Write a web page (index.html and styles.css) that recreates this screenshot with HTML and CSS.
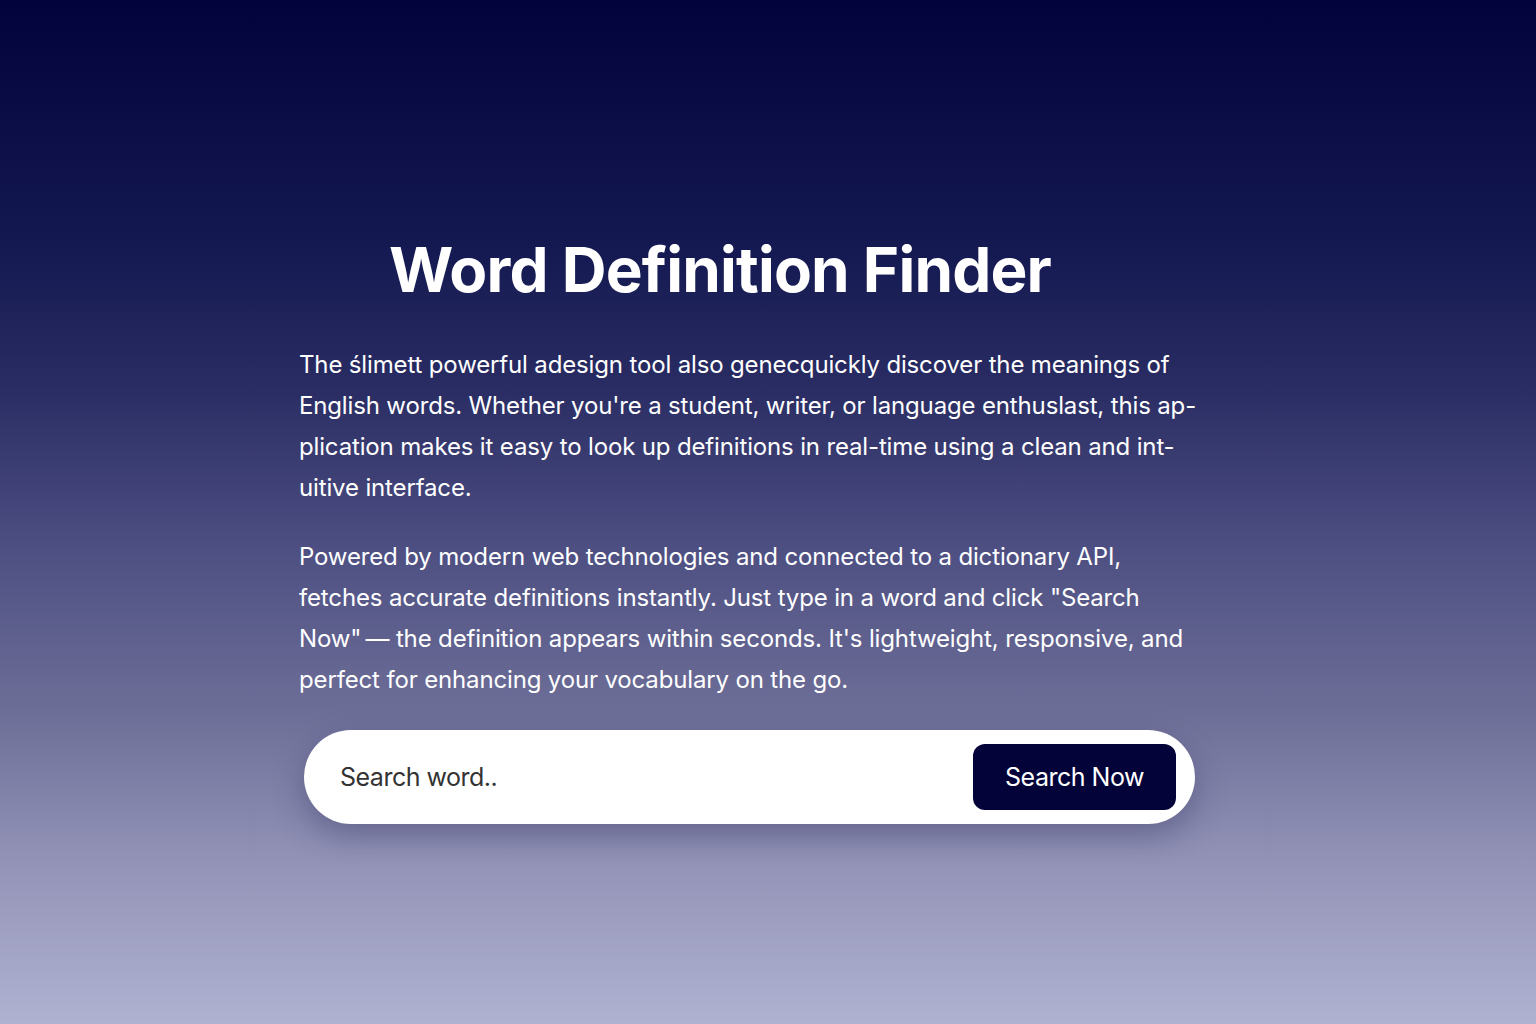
FILE: index.html
```html
<!DOCTYPE html>
<html lang="en">
<head>
<meta charset="utf-8">
<title>Word Definition Finder</title>
<link rel="stylesheet" href="styles.css">
</head>
<body>
<main class="page">
  <section class="content">
    <h1 class="title">Word Definition Finder</h1>
    <p class="text">The ślimett powerful adesign tool also genecquickly discover the meanings of<br>English words. Whether you're a student, writer, or language enthuslast, this ap-<br>plication makes it easy to look up definitions in real-time using a clean and int-<br>uitive interface.</p>
    <p class="text">Powered by modern web technologies and connected to a dictionary API,<br>fetches accurate definitions instantly. Just type in a word and click "Search<br>Now"&thinsp;— the definition appears within seconds. It's lightweight, responsive, and<br>perfect for enhancing your vocabulary on the go.</p>
    <form class="search">
      <input class="search-input" type="text" placeholder="Search word..">
      <button class="search-btn" type="button">Search Now</button>
    </form>
  </section>
</main>
</body>
</html>
```

FILE: styles.css
```css
* { box-sizing: border-box; }
html, body { margin: 0; padding: 0; height: 100%; }
body {
  font-family: Inter, "Noto Sans", sans-serif;
  color: #fff;
  background: linear-gradient(180deg, #02023c 0%, #151a52 25%, #2a2d63 38%, #4a4c80 52%, #6e6f98 70%, #9495b8 85%, #b0b2d2 100%);
  min-height: 1024px;
}
.page {
  display: flex;
  justify-content: center;
  padding-top: 230px;
}
.content {
  width: 898px;
  margin-left: -40px;
}
.title {
  margin: 0 0 34px 0;
  padding-right: 56px;
  text-align: center;
  font-size: 62px;
  font-weight: 700;
  letter-spacing: -0.8px;
  line-height: 80px;
}
.text {
  margin: 0 0 28px 0;
  font-size: 24px;
  line-height: 41px;
  letter-spacing: -0.15px;
  white-space: nowrap;
}
.search {
  margin: 30px 0 0 5px;
  width: 891px;
  height: 94px;
  background: #fff;
  border-radius: 47px;
  display: flex;
  align-items: center;
  padding: 0 19px 0 34px;
  box-shadow: 0 12px 30px rgba(40, 40, 90, 0.35);
}
.search-input {
  flex: 1;
  border: none;
  outline: none;
  background: transparent;
  font-family: Inter, "Noto Sans", sans-serif;
  font-size: 25px;
  letter-spacing: -0.5px;
  color: #333;
}
.search-input::placeholder { color: #333; }
.search-btn {
  width: 203px;
  height: 66px;
  border: none;
  border-radius: 12px;
  background: #03033a;
  color: #fff;
  font-family: Inter, "Noto Sans", sans-serif;
  font-size: 25px;
  letter-spacing: -0.5px;
}
```
